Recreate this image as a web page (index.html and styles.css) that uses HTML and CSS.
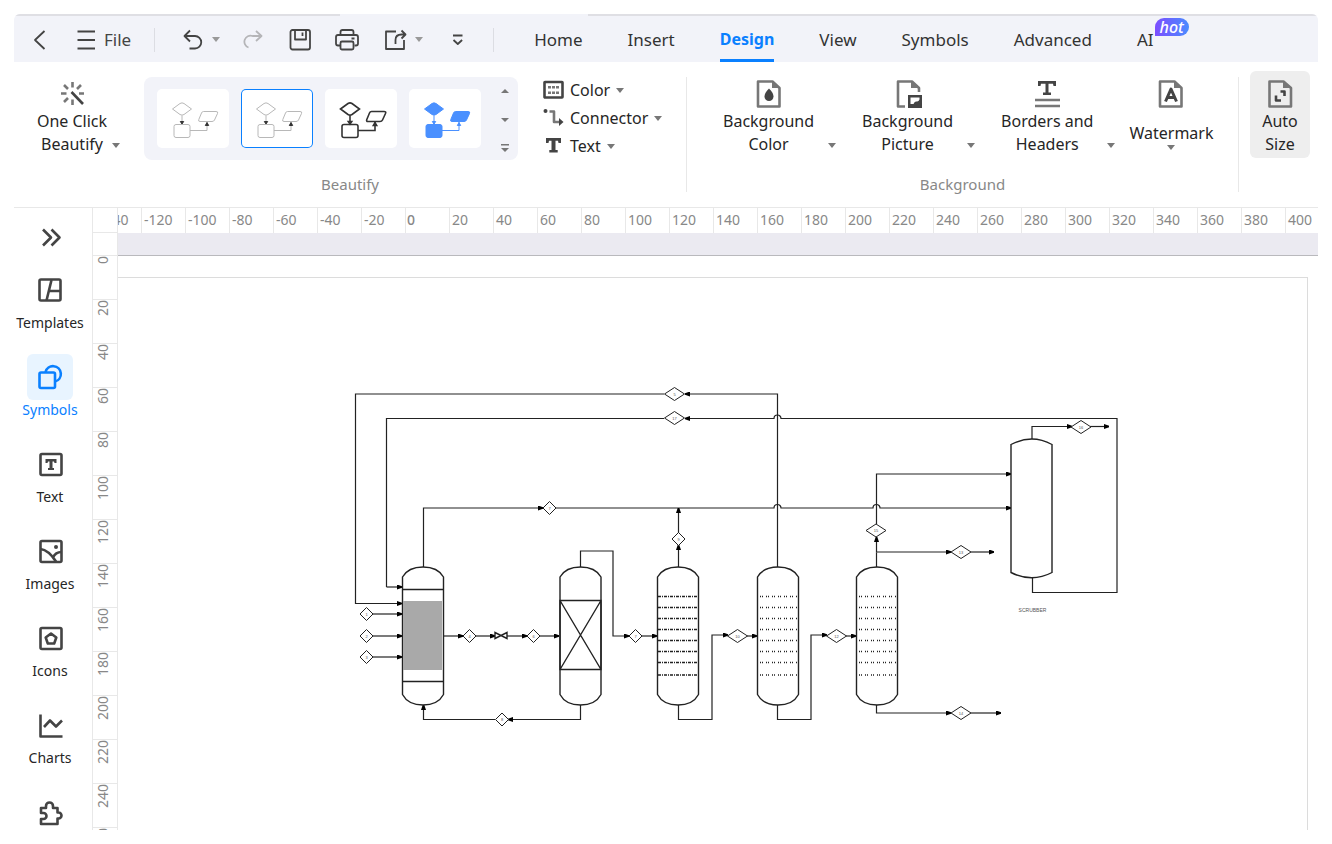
FILE: index.html
```html
<!DOCTYPE html>
<html lang="en">
  <head>
    <meta charset="UTF-8" />
    <meta name="viewport" content="width=device-width, initial-scale=1.0" />
    <title>Process Flow Diagram</title>
    <link rel="stylesheet" href="styles.css">
  </head>
  <body>
    <svg class="defs" aria-hidden="true">
      <symbol id="caret" viewBox="0 0 8 5"><path d="M0 0h8L4 5z" fill="currentColor" /></symbol>
      <symbol id="thumb" viewBox="0 0 72 58">
        <g class="shapes">
          <path d="M15.5 19 23 13.5Q25 12.200 27 13.500L34.500 19 27 24.500Q25 25.800 23 24.500z" />
          <rect x="17" y="34.500" width="16" height="13" rx="2" />
          <path d="M46.500 21.500H59Q61.500 21.500 60.500 23.500L57.500 30Q56.800 31.500 55 31.500H43Q41 31.500 41.800 29.500L44.500 23Q45.100 21.500 46.500 21.500z" />
        </g>
        <path class="wire" d="M25 25.500V34M33 40.500H50V32" />
        <path class="tips" d="M23.300 31.500h3.400L25 34zM48.300 35.500h3.400L50 32.500z" />
      </symbol>
    </svg>

    <div class="app">
      <header class="titlebar">
        <button class="back" aria-label="Back">
          <svg width="20" height="24" viewBox="0 0 20 24"><path d="M14.500 3 5 12l9.500 9" class="line" /></svg>
        </button>
        <button class="file">
          <svg width="24" height="24" viewBox="0 0 24 24"><path d="M3.500 3.500h17.500M3.500 12h17.500M3.500 20.500h17.500" class="line" /></svg>
          File
        </button>
        <i class="sep"></i>
        <div class="quick">
          <button class="split" aria-label="Undo">
            <svg width="24" height="24" viewBox="0 0 24 24"><path d="M9 2.500 3.500 8 9 13.500M4 8h10a6 6 0 0 1 0 12.500H8.500" class="line" /></svg>
            <svg class="caret"><use href="#caret" /></svg>
          </button>
          <button class="off" aria-label="Redo">
            <svg width="24" height="24" viewBox="0 0 24 24"><path d="M13 3l5.500 5-5.500 5M18 8H9.500a6 6 0 0 0-4 11.500" class="line" /></svg>
          </button>
          <button aria-label="Save">
            <svg width="24" height="24" viewBox="0 0 24 24"><rect x="0.500" y="2" width="19.500" height="19.500" rx="2" class="line" /><path d="M5 2v9.500h11V2M12.500 4.500v3.500" class="line" /></svg>
          </button>
          <button aria-label="Print">
            <svg width="24" height="24" viewBox="0 0 24 24"><path d="M3.500 7V4q0-2 2-2h9q2 0 2 2v3M3 17.500H1q-2 0-2-2V9q0-2 2-2h18q2 0 2 2v6.500q0 2-2 2h-1.500M14.500 10.500h3" class="line" /><rect x="3.500" y="13.500" width="13" height="8" rx="1.500" class="line" /></svg>
          </button>
          <button class="split" aria-label="Share">
            <svg width="24" height="24" viewBox="0 0 24 24"><path d="M12 3.500H2v17.500h18v-9M11.500 16V12q0-5.500 6-5.500h3.500M17.500 2.500l4 4-4 4" class="line" /></svg>
            <svg class="caret"><use href="#caret" /></svg>
          </button>
          <button aria-label="Customize toolbar">
            <svg width="24" height="24" viewBox="0 0 24 24"><path d="M7 7.500h9.500M7.500 12l4.300 4 4.300-4" class="line" /></svg>
          </button>
        </div>
        <i class="sep"></i>
        <nav class="tabs">
          <a href="#home">Home</a>
          <a href="#insert">Insert</a>
          <a href="#design" class="active">Design</a>
          <a href="#view">View</a>
          <a href="#symbols">Symbols</a>
          <a href="#advanced">Advanced</a>
          <a href="#ai">AI<span class="hot">hot</span></a>
        </nav>
      </header>

      <section class="ribbon">
        <div class="group beautify">
          <div class="tools">
            <button class="big one-click">
              <svg width="30" height="32" viewBox="0 0 30 32"><path d="M15.500 4v5.500M4 15.500h5.500M22 15.500h5M7 7l4 4M24 7l-4 4M7 24l4-4M15.500 21.500V27" class="bold soft" /><path d="M14.500 14 26 26" class="bold" /></svg>
              <span>One Click<br>Beautify</span>
              <svg class="caret"><use href="#caret" /></svg>
            </button>
            <div class="gallery">
              <button class="tile light" aria-label="Light style"><svg><use href="#thumb" /></svg></button>
              <button class="tile light selected" aria-label="Thin style"><svg><use href="#thumb" /></svg></button>
              <button class="tile dark" aria-label="Bold style"><svg><use href="#thumb" /></svg></button>
              <button class="tile blue" aria-label="Blue style"><svg><use href="#thumb" /></svg></button>
              <div class="scroll">
                <button aria-label="Previous styles"><svg width="8" height="12" viewBox="0 0 8 12"><path d="M0 8h8L4 4z" fill="currentColor" /></svg></button>
                <button aria-label="Next styles"><svg width="8" height="12" viewBox="0 0 8 12"><path d="M0 4h8L4 8z" fill="currentColor" /></svg></button>
                <button aria-label="More styles"><svg width="8" height="12" viewBox="0 0 8 12"><path d="M0 2h8v1.500H0zM0 6h8L4 10z" fill="currentColor" /></svg></button>
              </div>
            </div>
            <div class="menus">
              <button>
                <svg width="21" height="20" viewBox="0 0 21 20"><rect x="1.500" y="2" width="18" height="15.500" rx="0.500" class="bold" /><path d="M5 7.300h3M9 7.300h3M13 7.300h3M5 12.700h3M9 12.700h3M13 12.700h3" class="bold soft" /></svg>
                Color
                <svg class="caret"><use href="#caret" /></svg>
              </button>
              <button>
                <svg width="21" height="20" viewBox="0 0 21 20"><circle cx="2.500" cy="3" r="2" fill="currentColor" /><path d="M6.500 3.500H11V14h5" class="bold soft" /><path d="M16 10 20.500 14 16 18z" fill="currentColor" /></svg>
                Connector
                <svg class="caret"><use href="#caret" /></svg>
              </button>
              <button>
                <svg width="21" height="20" viewBox="0 0 21 20"><path d="M3 2h15v5h-2.500l-.5-2.300h-2.500V14h2.200v2.500H6.300V14h2.200V4.700H6L5.500 7H3z" fill="currentColor" /></svg>
                Text
                <svg class="caret"><use href="#caret" /></svg>
              </button>
            </div>
          </div>
          <h2>Beautify</h2>
        </div>
        <i class="rule"></i>
        <div class="group background">
          <div class="tools">
            <button class="big">
              <svg width="30" height="32" viewBox="0 0 30 32"><path d="M4 3.500h14.500L25.500 10v18.500H4z" class="bold soft" /><path d="M18 3v7h8z" class="fold" /><path d="M15 10.500q4.500 4.500 4.500 8a4.500 4.500 0 0 1-9 0q0-3.500 4.500-8z" fill="currentColor" /></svg>
              <span>Background<br>Color</span>
              <svg class="caret"><use href="#caret" /></svg>
            </button>
            <button class="big">
              <svg width="30" height="32" viewBox="0 0 30 32"><path d="M12 28.500H5v-25h14l7 6.500v4" class="bold soft" /><path d="M18 3v7h8z" class="fold" /><path d="M15 17h14v13H15zM17.500 19.500v6.500h3q1-3 3-2.500t3-2v-2z" fill="currentColor" fill-rule="evenodd" /></svg>
              <span>Background<br>Picture</span>
              <svg class="caret"><use href="#caret" /></svg>
            </button>
            <button class="big">
              <svg width="30" height="32" viewBox="0 0 30 32"><path d="M6 3h18v5h-2.500l-.5-2.300h-4.500v8.800h2.500V17h-8v-2.500h2.500V5.700H9L8.500 8H6z" fill="currentColor" /><path d="M3 22h25M3 28h25" class="bold soft" /></svg>
              <span>Borders and<br>Headers</span>
              <svg class="caret"><use href="#caret" /></svg>
            </button>
            <button class="big below">
              <svg width="30" height="32" viewBox="0 0 30 32"><path d="M4 3.500h14.500L25.500 10v18.500H4z" class="bold soft" /><path d="M18 3v7h8z" class="fold" /><path d="M9.500 23.500 15 11l5.500 12.500M11.500 19.500h7" class="heavy" /></svg>
              <span>Watermark</span>
              <svg class="caret"><use href="#caret" /></svg>
            </button>
          </div>
          <h2>Background</h2>
        </div>
        <i class="rule"></i>
        <div class="group">
          <button class="big auto">
            <svg width="30" height="32" viewBox="0 0 30 32"><path d="M4.500 3.500h14L26 10v18.500H4.500z" class="bold soft" /><path d="M18 3v7h8z" class="fold" /><path d="M15.500 13.500h4v4.500M11 17.500v5h5" class="bold" /></svg>
            <span>Auto<br>Size</span>
          </button>
        </div>
      </section>

      <div class="workspace">
        <aside class="sidebar">
          <button class="expand" aria-label="Expand panel">
            <svg width="24" height="24" viewBox="0 0 24 24"><path d="M4 4.500l8 8-8 8M12.500 4.500l8 8-8 8" class="bold" /></svg>
          </button>
          <button class="item">
            <span class="icon"><svg width="26" height="26" viewBox="0 0 26 26"><rect x="2.500" y="2.500" width="21" height="21" rx="1.500" class="bold" /><path d="M14.500 3 9.500 23.500M12 14h11.500M16.500 14v0" class="bold" /></svg></span>
            Templates
          </button>
          <button class="item current">
            <span class="icon"><svg width="26" height="26" viewBox="0 0 26 26"><path d="M8.500 8a7.800 7.800 0 1 1 9.500 9.500" class="bold" /><rect x="2.500" y="8.500" width="15.500" height="15.500" rx="1.500" class="bold" /></svg></span>
            Symbols
          </button>
          <button class="item">
            <span class="icon"><svg width="26" height="26" viewBox="0 0 26 26"><rect x="3.500" y="3" width="21" height="21" rx="1.500" class="bold" /><path d="M8.500 8h11v4h-2l-.5-1.500h-1.500v6.500h1.500v2h-6v-2h1.500v-6.500H11l-.5 1.500h-2z" fill="currentColor" /></svg></span>
            Text
          </button>
          <button class="item">
            <span class="icon"><svg width="26" height="26" viewBox="0 0 26 26"><rect x="3.500" y="3" width="21" height="21" rx="1.500" class="bold" /><path d="M3.500 11q8 1 15.500 12.500M24.500 14q-6 0-8.500 5.500" class="bold" /><circle cx="19" cy="9" r="2" fill="currentColor" /></svg></span>
            Images
          </button>
          <button class="item">
            <span class="icon"><svg width="26" height="26" viewBox="0 0 26 26"><rect x="3.500" y="3" width="21" height="21" rx="1.500" class="bold" /><path d="M14 8.500 19.300 12.500 17.200 18.500h-6.400L8.700 12.500z" class="bold" /></svg></span>
            Icons
          </button>
          <button class="item">
            <span class="icon"><svg width="26" height="26" viewBox="0 0 26 26"><path d="M3.500 2.500V24.500h22M7 15l6-6.500 6 6L25 8.500" class="bold" /></svg></span>
            Charts
          </button>
          <button class="item" aria-label="Plugins">
            <span class="icon"><svg width="26" height="26" viewBox="0 0 26 26"><path d="M4 9H9V7a3.500 3.500 0 0 1 7 0V9H20.500V13.500h1a3 3 0 0 1 0 6H20.500V25H4V20H6.500a2.700 2.700 0 0 0 0-6H4z" class="bold" /></svg></span>
          </button>
        </aside>

        <div class="ruler-v">
          <span class="corner"></span>
          <span>0</span><span>20</span><span>40</span><span>60</span><span>80</span><span>100</span><span>120</span>
          <span>140</span><span>160</span><span>180</span><span>200</span><span>220</span><span>240</span><span>260</span>
        </div>

        <main class="stage">
          <div class="ruler-h">
            <span>-140</span><span>-120</span><span>-100</span><span>-80</span><span>-60</span><span>-40</span><span>-20</span>
            <span class="zero">0</span><span>20</span><span>40</span><span>60</span><span>80</span><span>100</span><span>120</span>
            <span>140</span><span>160</span><span>180</span><span>200</span><span>220</span><span>240</span><span>260</span>
            <span>280</span><span>300</span><span>320</span><span>340</span><span>360</span><span>380</span><span>400</span>
          </div>
          <div class="canvas">
            <div class="page">
              <svg class="diagram" viewBox="118 278 1189 552">
                <defs>
                  <marker id="arrow" viewBox="0 0 5 5" refX="5" refY="2.500" markerWidth="5" markerHeight="5" markerUnits="userSpaceOnUse" orient="auto"><path d="M0 0 5 1.700v1.600L0 5z" /></marker>
                  <path id="small" d="M-6.500 0 0-6.500 6.500 0 0 6.500z" />
                  <path id="wide" d="M-10 0 0-6.500 10 0 0 6.500z" />
                  <path id="column" d="M0 10C4 3 12 0 20.500 0S37 3 41 10V127.500C37 135 29 138 20.500 138S4 135 0 127.500z" />
                  <path id="trays" d="M0 0h37M0 11h37M0 22h37M0 33h37M0 44h37M0 55h37M0 66h37M0 78.500h37" />
                  <path id="wide-trays" d="M0 0h40M0 11h40M0 22h40M0 33h40M0 44h40M0 55h40M0 66h40M0 78.500h40" />
                </defs>

                <!-- pipes without an arrow -->
                <g class="pipe">
                  <path d="M664 418.500H386.500V587" />
                  <path d="M876.500 567V552.500" />
                  <path d="M664 394H664" />
                </g>

                <!-- pipes ending in an arrow -->
                <g class="pipe flow">
                  <path d="M664 394H355.500V603.500H402" />
                  <path d="M386.500 587H402" />
                  <path d="M777.500 567V394H685" />
                  <path d="M1032.500 578V592.500H1117V418.500H781a3.500 3.500 0 0 0-7 0H685" />
                  <path d="M423.500 567V508H543" />
                  <path d="M556 508H774a3.500 3.500 0 0 1 7 0H873a3.500 3.500 0 0 1 7 0H1011" />
                  <path d="M373 614H402" />
                  <path d="M373 636H402" />
                  <path d="M373 657H402" />
                  <path d="M443 636H463" />
                  <path d="M476 636H495" />
                  <path d="M507 636H527" />
                  <path d="M540 636H559" />
                  <path d="M580.500 705V719.500H508" />
                  <path d="M495 719.500H423.500V705" />
                  <path d="M580.500 567V551H613V636H629" />
                  <path d="M642 636H657" />
                  <path d="M678.500 567V545" />
                  <path d="M678.500 533V508" />
                  <path d="M678.500 705V719.500H712V635H728" />
                  <path d="M747 636H757" />
                  <path d="M777.500 705V719.500H811V635H827" />
                  <path d="M846 636H856" />
                  <path d="M876.500 552.500V537" />
                  <path d="M876.500 524V474H1011" />
                  <path d="M876.500 552H951" />
                  <path d="M971 552H994" />
                  <path d="M876.500 705V713H951" />
                  <path d="M971 713H1001" />
                  <path d="M1032 439V426.500H1072" />
                  <path d="M1090 426.500H1109" />
                </g>

                <!-- vessels -->
                <g class="vessel">
                  <use href="#column" x="402.500" y="567" />
                  <path d="M402.500 589.500H443.500M402.500 681.500H443.500" />
                  <use href="#column" x="560" y="567" />
                  <path d="M560 600.500H601V669.500H560zL601 669.500M601 600.500 560 669.500" />
                  <use href="#column" x="657.500" y="567" />
                  <use href="#column" x="757.500" y="567" />
                  <use href="#column" x="856.500" y="567" />
                  <path d="M1011 444.500Q1032 433.500 1052 444.500V572.500Q1032 583 1011 572.500z" />
                  <path d="M495 632.500V638.500L507 632.500V638.500z" />
                </g>
                <rect x="403" y="601" width="39" height="69" class="packing" />
                <g class="tray">
                  <use href="#wide-trays" x="658" y="596.500" class="dense" />
                  <use href="#trays" x="760" y="596.500" />
                  <use href="#trays" x="859" y="596.500" />
                </g>

                <!-- stream tags -->
                <g class="tag">
                  <use href="#small" x="366.500" y="614" /><text x="366.500" y="615.500">1</text>
                  <use href="#small" x="366.500" y="636" /><text x="366.500" y="637.500">2</text>
                  <use href="#small" x="366.500" y="657" /><text x="366.500" y="658.500">3</text>
                  <use href="#small" x="469.500" y="636" /><text x="469.500" y="637.500">4</text>
                  <use href="#small" x="533.500" y="636" /><text x="533.500" y="637.500">6</text>
                  <use href="#small" x="549.500" y="508" /><text x="549.500" y="509.500">7</text>
                  <use href="#small" x="502" y="719.500" /><text x="502" y="721">8</text>
                  <use href="#small" x="635.500" y="636" /><text x="635.500" y="637.500">7</text>
                  <use href="#small" x="678.500" y="539" /><text x="678.500" y="540.500">9</text>
                  <use href="#wide" x="674.500" y="394" /><text x="674.500" y="395.500">5</text>
                  <use href="#wide" x="674.500" y="418" /><text x="674.500" y="419.500">17</text>
                  <use href="#wide" x="737.500" y="636" /><text x="737.500" y="637.500">10</text>
                  <use href="#wide" x="836.500" y="636" /><text x="836.500" y="637.500">12</text>
                  <use href="#wide" x="876" y="530.500" /><text x="876" y="532">15</text>
                  <use href="#wide" x="961" y="552" /><text x="961" y="553.500">13</text>
                  <use href="#wide" x="961" y="713" /><text x="961" y="714.500">14</text>
                  <use href="#wide" x="1081" y="427" /><text x="1081" y="428.500">16</text>
                </g>
                <text x="1032.500" y="612" class="caption">SCRUBBER</text>
              </svg>
            </div>
          </div>
        </main>
      </div>
    </div>
  </body>
</html>
```

FILE: styles.css
```css
:root {
  --bar: #f2f3f9;
  --text: #262626;
  --icon: #444444;
  --soft: #777777;
  --muted: #888888;
  --line: #e8e8e8;
  --blue: #0a80ff;
}
* {
  margin: 0;
  padding: 0;
  box-sizing: border-box;
}
body {
  height: 100vh;
  padding: 14px;
  background-color: #ffffff;
  color: var(--text);
  font-family: "Noto Sans", "Open Sans", sans-serif;
  font-size: 16px;
}
button {
  border: none;
  background: none;
  color: inherit;
  font: inherit;
  cursor: pointer;
}
svg {
  display: block;
  flex: none;
  overflow: visible;
  color: var(--icon);
}
.defs {
  position: absolute;
  width: 0;
  height: 0;
}
.line,
.bold,
.heavy {
  fill: none;
  stroke: currentColor;
  stroke-width: 1.8;
  stroke-linejoin: round;
}
.bold {
  stroke-width: 2.6;
}
.heavy {
  stroke-width: 3;
}
.soft {
  stroke: var(--soft);
}
.fold {
  fill: var(--soft);
}
.caret {
  width: 8px;
  height: 5px;
  color: var(--soft);
}

.app {
  display: flex;
  flex-direction: column;
  height: 100%;
  overflow: hidden;
  border-radius: 6px 6px 0 0;
}

.titlebar {
  display: flex;
  align-items: center;
  flex: none;
  height: 48px;
  padding: 3px 16px 0;
  background: linear-gradient(90deg, #dfdfe4 25%, var(--bar) 25%, var(--bar) 44%, #dfdfe4 44%) 0 0 / 100% 2px no-repeat var(--bar);
  font-size: 17px;
  color: var(--icon);
}
.titlebar .caret {
  color: #999999;
}
.file {
  display: flex;
  align-items: center;
  gap: 6px;
  margin: 0 23px 0 24px;
}
.sep {
  width: 1px;
  height: 24px;
  background-color: #dcdde3;
}
.quick {
  display: flex;
  gap: 23px;
  margin: 0 23px 0 26px;
}
.split {
  display: flex;
  align-items: center;
  gap: 7px;
}
.off svg {
  color: #b5b5b8;
}
.tabs {
  display: flex;
  align-self: stretch;
  gap: 45px;
  margin-left: 40px;
}
.tabs a {
  position: relative;
  line-height: 45px;
  color: #333333;
  text-decoration: none;
}
.tabs .active {
  font-size: 16px;
  font-weight: 700;
  color: var(--blue);
  box-shadow: inset 0 -3px var(--blue);
}
.hot {
  position: absolute;
  left: 100%;
  top: 1px;
  margin-left: 1px;
  padding: 0 5px;
  border-radius: 9px 9px 9px 0;
  background: linear-gradient(90deg, #7c4dff, #4a8cff);
  font-size: 16px;
  font-style: italic;
  font-weight: 500;
  line-height: 18px;
  color: #ffffff;
}

.ribbon {
  display: flex;
  flex: none;
  height: 146px;
  padding-top: 9px;
  border-bottom: 1px solid var(--line);
}
.rule {
  width: 1px;
  margin: 6px 0 15px;
  background-color: var(--line);
}
.group {
  display: flex;
  flex-direction: column;
  justify-content: space-between;
  padding-bottom: 13px;
}
.beautify {
  flex: 672;
}
.background {
  flex: 551;
}
.group h2 {
  font-size: 15px;
  font-weight: 400;
  line-height: 20px;
  text-align: center;
  color: var(--muted);
}
.tools {
  display: flex;
  padding-top: 6px;
}
.big {
  position: relative;
  display: flex;
  flex-direction: column;
  align-items: center;
  height: 83px;
  padding-top: 1px;
  line-height: 23px;
}
.big .caret {
  position: absolute;
  right: -22px;
  bottom: 12px;
}
.one-click {
  width: 76px;
  margin: 0 34px 0 20px;
}
.one-click .caret {
  right: -10px;
}
.gallery {
  display: flex;
  gap: 12px;
  padding: 12px 9px 12px 13px;
  border-radius: 8px;
  background-color: var(--bar);
}
.tile {
  width: 72px;
  height: 59px;
  border-radius: 5px;
  background-color: #ffffff;
}
.tile svg {
  width: 72px;
  height: 58px;
  color: inherit;
}
.selected {
  box-shadow: inset 0 0 0 1px var(--blue);
}
.shapes,
.wire {
  fill: none;
  stroke: currentColor;
}
.shapes {
  fill: var(--inside);
}
.light {
  --inside: none;
  --tip: #333333;
  color: #b8b8b8;
}
.dark {
  --inside: none;
  --tip: #333333;
  color: #333333;
  stroke-width: 1.6;
}
.blue {
  --inside: #4a90ff;
  --tip: #4a90ff;
  color: #4a90ff;
}
.tips {
  fill: var(--tip);
  stroke: var(--tip);
}
.scroll {
  display: flex;
  flex-direction: column;
  justify-content: space-between;
  margin: -4px 0 -6px 8px;
}
.scroll svg {
  color: var(--soft);
}
.menus {
  display: flex;
  flex-direction: column;
  align-items: flex-start;
  margin: -1px 0 0 25px;
}
.menus button {
  display: flex;
  align-items: center;
  gap: 6px;
  height: 28px;
}
.background .tools {
  gap: 48px;
  padding-left: 36px;
}
.below {
  margin-left: -12px;
}
.below span {
  margin-top: 12px;
}
.big.below .caret {
  right: auto;
  bottom: 10px;
}
.auto {
  width: 60px;
  height: 87px;
  margin: 0 8px 0 11px;
  padding-top: 7px;
  border-radius: 6px;
  background-color: #eeeeee;
}

.workspace {
  display: flex;
  flex: 1;
  min-height: 0;
}
.sidebar {
  display: flex;
  flex-direction: column;
  flex: none;
  width: 78px;
  overflow: hidden;
  font-size: 14px;
}
.sidebar button {
  display: flex;
  flex-direction: column;
  align-items: center;
  flex: none;
}
.expand {
  height: 59px;
  padding: 17px 4px 0 0;
}
.sidebar .item {
  height: 87px;
  padding-right: 6px;
  line-height: 20px;
}
.icon {
  display: grid;
  place-items: center;
  width: 46px;
  height: 46px;
  border-radius: 6px;
}
.current,
.current svg {
  color: var(--blue);
}
.current .icon {
  background-color: #e8f4ff;
}

.ruler-v {
  display: flex;
  flex-direction: column;
  flex: none;
  width: 26px;
  overflow: hidden;
  border: solid var(--line);
  border-width: 0 1px;
  font-size: 14px;
  color: var(--muted);
}
/* turned upside down so the figures read from bottom to top */
.ruler-v span {
  flex: none;
  width: 24px;
  height: 44px;
  border-top: 1px solid var(--line);
  writing-mode: vertical-rl;
  transform: rotate(180deg);
  line-height: 20px;
  text-align: right;
}
.ruler-v span:not(.corner) {
  border-top: none;
  border-bottom: 1px solid var(--line);
}
.ruler-v .corner {
  height: 47px;
  background: linear-gradient(var(--line), var(--line)) 0 22px / 100% 1px no-repeat;
  border: none;
}
.stage {
  display: flex;
  flex-direction: column;
  flex: 1;
  min-width: 0;
}
.ruler-h {
  display: flex;
  flex: none;
  height: 25px;
  overflow: hidden;
  font-size: 14px;
  line-height: 23px;
  color: var(--muted);
}
.ruler-h span {
  flex: none;
  width: 44px;
  padding-left: 2px;
  border-left: 1px solid var(--line);
}
.ruler-h span:first-child {
  margin-left: -21px;
}
.ruler-h .zero {
  padding-left: 1px;
  font-weight: 500;
}
.canvas {
  display: flex;
  flex: 1;
  min-height: 0;
  padding: 21px 10px 0 0;
  border-top: 1px solid #b9b9bd;
  margin-top: 22px;
  box-shadow: 0 -22px #ebeaf1;
}
.page {
  flex: 1;
  min-width: 0;
  border: solid #dcdcdc;
  border-width: 1px 1px 0 0;
}
.diagram {
  width: 100%;
  height: 100%;
}
.pipe {
  fill: none;
  stroke: #222222;
  stroke-width: 1.2;
}
.flow path {
  marker-end: url(#arrow);
}
.vessel {
  fill: none;
  stroke: #222222;
  stroke-width: 1.4;
}
.packing {
  fill: #a9a9a9;
}
.tray {
  fill: none;
  stroke: #222222;
  stroke-width: 1.4;
  stroke-dasharray: 1 1 1 3;
}
.dense {
  stroke-dasharray: 3 1 1 1;
}
.tag {
  fill: #ffffff;
  stroke: #222222;
}
.tag text,
.caption {
  fill: #555555;
  stroke: none;
  font-family: "Liberation Sans", sans-serif;
  font-size: 4px;
  text-anchor: middle;
}
.caption {
  font-size: 5px;
}
```
